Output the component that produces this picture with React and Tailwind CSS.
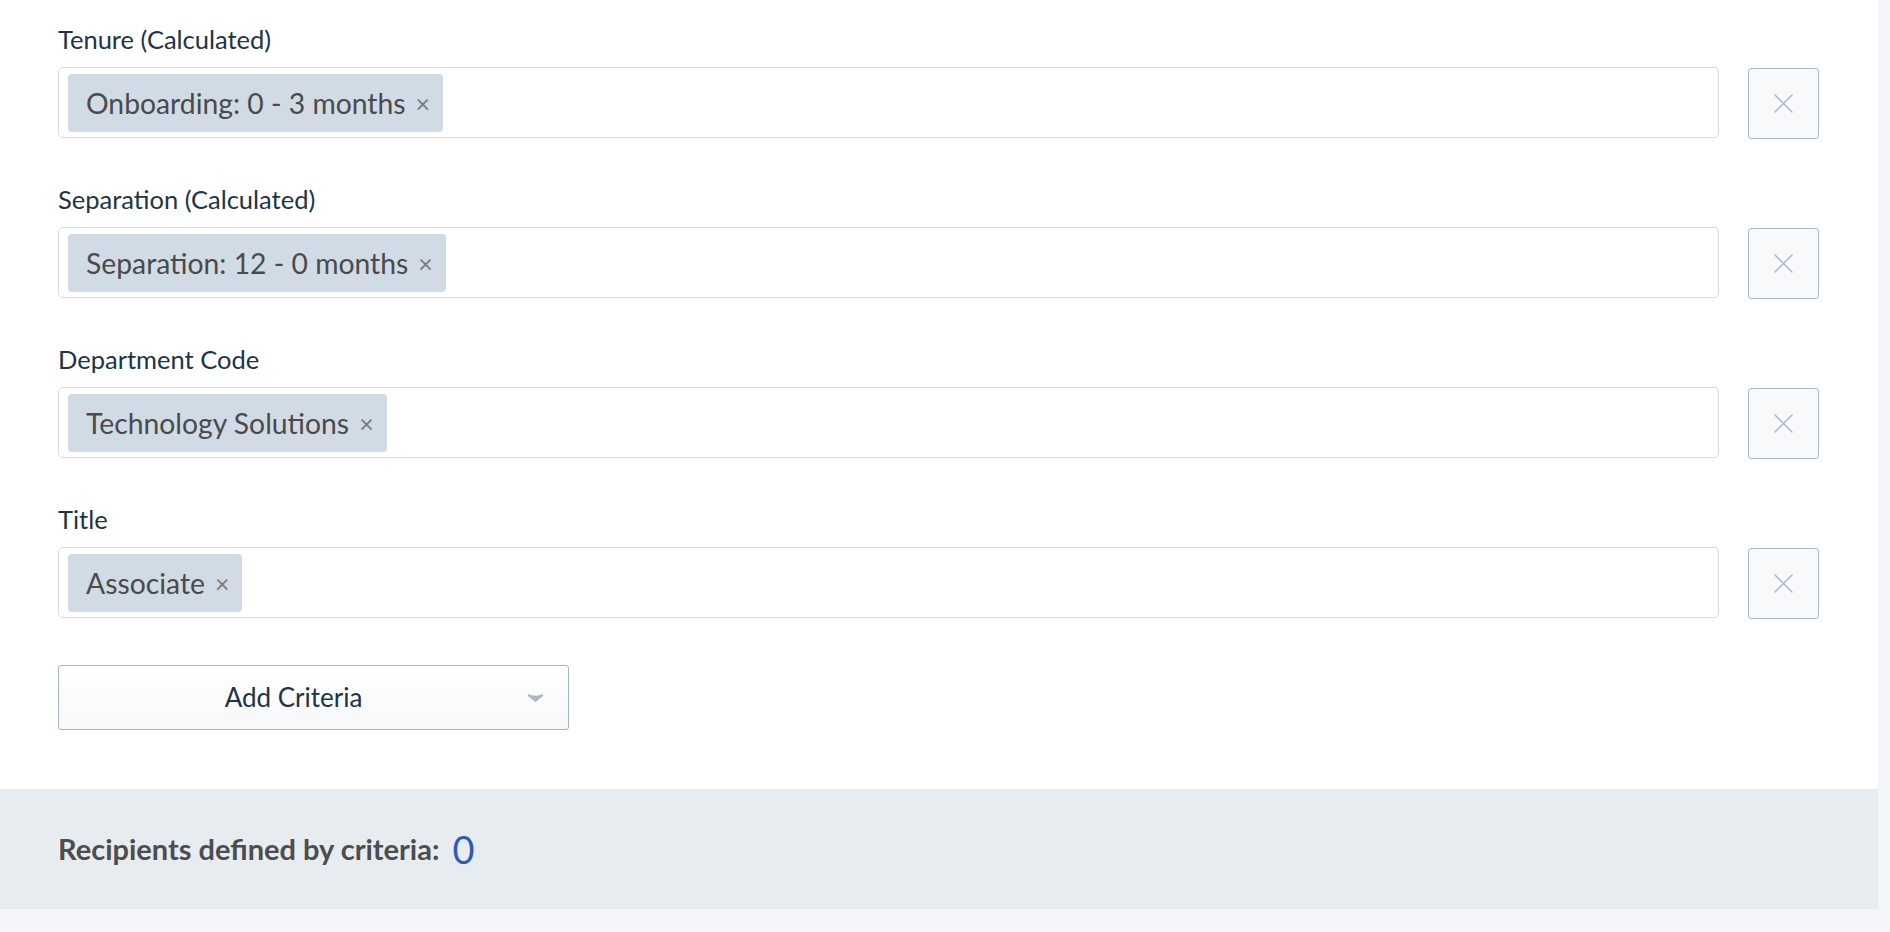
import React from 'react';

const criteria = [
  { label: 'Tenure (Calculated)', value: 'Onboarding: 0 - 3 months' },
  { label: 'Separation (Calculated)', value: 'Separation: 12 - 0 months' },
  { label: 'Department Code', value: 'Technology Solutions' },
  { label: 'Title', value: 'Associate' }
];

function CloseIcon() {
  return (
    <svg width="19" height="19" viewBox="0 0 19 19" fill="none">
      <path d="M1 1 L18 18 M18 1 L1 18" stroke="#a9b8cb" strokeWidth="1.5" strokeLinecap="round" />
    </svg>
  );
}

function Chevron() {
  return (
    <svg width="15" height="9" viewBox="0 0 15 9">
      <path d="M0 1 Q7.5 4.5 15 1 L15 3 L7.5 9 L0 3 Z" fill="#a9b8cb" />
    </svg>
  );
}

function CriteriaRow({ label, value }) {
  return (
    <div className="mb-[48px]">
      <label className="block text-[25.5px] leading-[27px] text-[#203448] mb-[14px]">{label}</label>
      <div className="flex items-start gap-[29px] h-[71px]">
        <div className="flex-1 h-[71px] flex items-center pl-[9px] border border-[#d9d9d9] rounded-[5px] bg-white">
          <span className="h-[58px] flex items-center pl-[18px] pr-[13px] bg-[#d1dbe6] rounded-[4px] text-[28.3px] leading-[30px] text-[#4a4a4a]">
            {value}
            <span className="ml-[10px] text-[25px] text-[#7a7a7a]">×</span>
          </span>
        </div>
        <button className="mt-[1px] w-[71px] h-[71px] shrink-0 flex items-center justify-center border border-[#a7b7ca] bg-[#f7f9fb] rounded-[3px]">
          <CloseIcon />
        </button>
      </div>
    </div>
  );
}

function App() {
  return (
    <div className="min-h-screen bg-[#f3f5f9] font-[Lato,sans-serif]">
      <div className="w-[1878px] bg-white rounded-br-[4px] pt-[26px] pl-[58px] pr-[59px] pb-[59px]">
        {criteria.map((c) => (
          <CriteriaRow key={c.label} label={c.label} value={c.value} />
        ))}
        <button className="-mt-[1px] w-[511px] h-[65px] flex items-center border border-[#a6b6c9] rounded-[3px] bg-gradient-to-b from-white to-[#f6f8fa]">
          <span className="flex-1 text-center text-[26px] text-[#203448]">Add Criteria</span>
          <span className="pr-[25px] flex items-center">
            <Chevron />
          </span>
        </button>
      </div>
      <div className="w-[1878px] h-[120px] bg-[#e7ecf0] flex items-center pl-[58px]">
        <span className="text-[29px] font-bold text-[#4b4d4f]">Recipients defined by criteria:</span>
        <span className="ml-[13px] text-[38px] text-[#2f5bb8]">0</span>
      </div>
    </div>
  );
}

export default App;
